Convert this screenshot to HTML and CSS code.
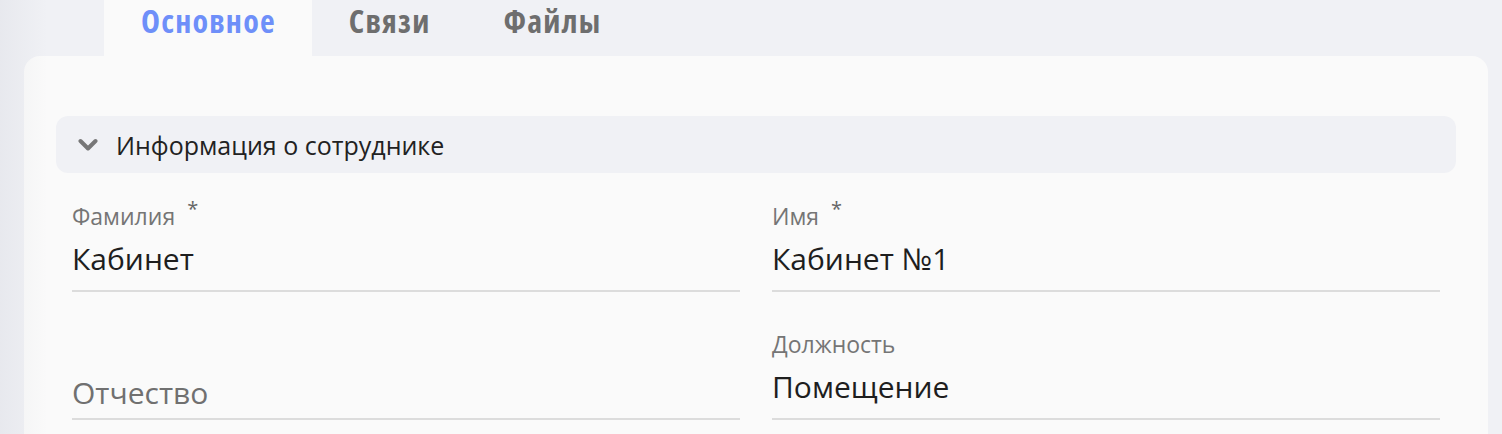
FILE: index.html
```html
<!DOCTYPE html>
<html lang="ru">
<head>
<meta charset="utf-8">
<title>Сотрудник</title>
<link rel="stylesheet" href="styles.css">
</head>
<body>
<div class="page">
  <nav class="tabs">
    <div class="tab tab-active">Основное</div>
    <div class="tab">Связи</div>
    <div class="tab">Файлы</div>
  </nav>
  <main class="card">
    <div class="section-head">
      <svg class="chevron" viewBox="0 0 20 14" width="20" height="14" aria-hidden="true">
        <path d="M2.5 3 L10 10.5 L17.5 3" fill="none" stroke="#777" stroke-width="4" stroke-linecap="round" stroke-linejoin="round"/>
      </svg>
      <span class="section-title">Информация о сотруднике</span>
    </div>
    <div class="fields">
      <div class="field">
        <div class="label">Фамилия<span class="req">*</span></div>
        <div class="value">Кабинет</div>
      </div>
      <div class="field">
        <div class="label">Имя<span class="req">*</span></div>
        <div class="value">Кабинет №1</div>
      </div>
      <div class="field field-empty">
        <div class="placeholder">Отчество</div>
      </div>
      <div class="field">
        <div class="label">Должность</div>
        <div class="value">Помещение</div>
      </div>
    </div>
  </main>
  <div class="edge-shade"></div>
</div>
</body>
</html>
```
FILE: styles.css
```css
* { box-sizing: border-box; }
html, body { margin: 0; padding: 0; }
body {
  background: #f0f1f5;
  font-family: "Open Sans", "Noto Sans", sans-serif;
  color: #222;
  height: 434px;
  overflow: hidden;
}
.page {
  position: relative;
  min-height: 434px;
}
.edge-shade {
  position: absolute;
  left: 0; top: 0; bottom: 0;
  width: 48px;
  background: linear-gradient(to right, rgba(40,50,80,0.045), rgba(40,50,80,0));
  pointer-events: none;
}
.tabs {
  display: flex;
  padding-left: 104px;
  height: 56px;
}
.tab {
  padding: 0 36px 0 37px;
  height: 56px;
  font-size: 32px;
  font-weight: 700;
  font-stretch: 80%;
  letter-spacing: 1.2px;
  line-height: 42px;
  color: #6e6e6e;
}
.tab-active {
  background: #fafafa;
  color: #6e8ff9;
}
.card {
  margin: 0 14px 0 24px;
  background: #fafafa;
  border-radius: 16px 16px 0 0;
  padding: 60px 32px 40px;
  min-height: 400px;
}
.section-head {
  display: flex;
  align-items: center;
  height: 57px;
  background: #f0f1f5;
  border-radius: 12px;
  padding-left: 22px;
  gap: 18px;
}
.chevron { display: block; }
.section-title {
  font-size: 25px;
  line-height: 34px;
  color: #222;
}
.fields {
  display: grid;
  grid-template-columns: 1fr 1fr;
  column-gap: 32px;
  row-gap: 9px;
  padding: 0 16px;
}
.field {
  height: 119px;
  border-bottom: 2px solid #dcdcdc;
  display: flex;
  flex-direction: column;
  padding-top: 27px;
}
.label {
  font-size: 23px;
  line-height: 32px;
  color: #757575;
}
.req {
  font-size: 20px;
  vertical-align: 9px;
  line-height: 0;
  margin-left: 12px;
  color: #666;
}
.value {
  margin-top: 7px;
  font-size: 30px;
  line-height: 40px;
  color: #1e1e1e;
}
.field-empty {
  justify-content: flex-end;
  padding-bottom: 5px;
}
.placeholder {
  font-size: 30px;
  line-height: 40px;
  color: #707070;
}
```
